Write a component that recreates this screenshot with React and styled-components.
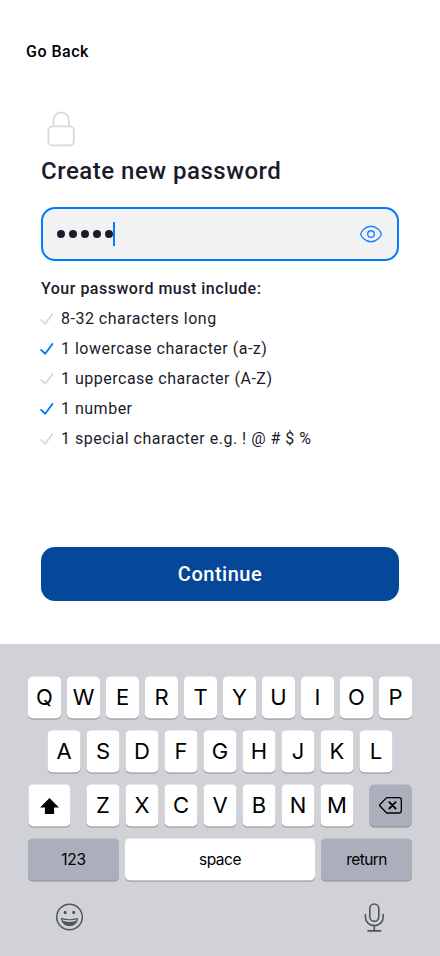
import React from "react";
import styled, { createGlobalStyle } from "styled-components";

const GlobalStyle = createGlobalStyle`
  *, *::before, *::after { box-sizing: border-box; }
  body { margin: 0; background: #fff; font-family: Roboto, sans-serif; }
  svg { display: block; flex: none; }
  button { font: inherit; border: 0; padding: 0; margin: 0; background: none; color: inherit; }
`;

const Screen = styled.div`
  width: 440px;
  height: 956px;
  display: flex;
  flex-direction: column;
  overflow: hidden;
  background: #fff;
`;

const Header = styled.header`
  height: 104px;
  padding: 42px 26px 0;
`;

const BackButton = styled.button`
  display: block;
  color: #000;
  font-size: 16px;
  line-height: 19px;
  font-weight: 500;
  letter-spacing: 0.5px;
`;

const Form = styled.main`
  flex: 1;
  display: flex;
  flex-direction: column;
  padding: 5px 41px 43px;
  color: #1b1b2b;
`;

const LockWrap = styled.div`
  height: 45px;
  padding-left: 5px;
`;

const Title = styled.h1`
  margin: 3px 0 22px;
  font-size: 24px;
  line-height: 28px;
  font-weight: 500;
  letter-spacing: 0.5px;
`;

const Field = styled.div`
  height: 54px;
  display: flex;
  align-items: center;
  padding: 0 14px 0 14px;
  border: 2px solid #007bff;
  border-radius: 14px;
  background: #f2f2f2;
`;

const Dots = styled.div`
  display: flex;
  gap: 4px;
`;

const Dot = styled.span`
  width: 8px;
  height: 8px;
  border-radius: 50%;
  background: #1b1b2b;
`;

const Caret = styled.span`
  width: 2px;
  height: 24px;
  background: #007bff;
`;

const EyeButton = styled.button`
  margin-left: auto;
`;

const RulesTitle = styled.h2`
  margin: 18px 0 1px;
  font-size: 16px;
  line-height: 19px;
  font-weight: 500;
  letter-spacing: 0.5px;
`;

const Rules = styled.ul`
  list-style: none;
  margin: 0;
  padding: 4px 0 0;
`;

const Rule = styled.li`
  height: 30px;
  display: flex;
  align-items: center;
  gap: 6px;
  margin-left: -2px;
  font-size: 16px;
  line-height: 19px;
  letter-spacing: 0.5px;
  color: #1b1b2b;

  svg { color: ${(p) => (p.$met ? "#007bff" : "#d9d9d9")}; }
`;

const ContinueButton = styled.button`
  margin-top: auto;
  height: 54px;
  border-radius: 14px;
  background: #054798;
  color: #fff;
  font-size: 20px;
  font-weight: 500;
  letter-spacing: 0.5px;
`;

const Keyboard = styled.section`
  height: 312px;
  padding-top: 32px;
  background: #d1d2d8;
  font-family: Inter, sans-serif;
  color: #000;
`;

const KeyRow = styled.div`
  display: flex;
  gap: 6px;
  height: 42px;
  margin: 0 0 12px ${(p) => p.$inset}px;
  transform: translate(${(p) => (p.$half ? -0.5 : 0)}px, 0.4px);
`;

const LetterGroup = styled.div`
  display: flex;
  gap: 6px;
  margin: 0 10px;
`;

const Key = styled.button`
  width: ${(p) => p.$width || 33}px;
  height: 42px;
  display: flex;
  align-items: center;
  justify-content: center;
  border-radius: 4.6px;
  background: ${(p) => (p.$muted ? "#abafbb" : "#fff")};
  box-shadow: 0 1px 0 #898a8d;
  font-size: ${(p) => (p.$label ? 15.5 : 22)}px;
  letter-spacing: ${(p) => p.$tracking || 0}px;
`;

const KeyboardFooter = styled.div`
  display: flex;
  justify-content: space-between;
  padding: 10px 54px 0 55px;
  color: #50555c;
  transform: translateY(0.5px);
`;

const LockIcon = () => (
  <svg width="30" height="40" viewBox="0 0 30 40" fill="none" stroke="#d9d9d9" strokeWidth="1.8">
    <rect x="2.3" y="17.4" width="25.5" height="19" rx="4" />
    <path d="M7.5 17V11.5a7.7 8.2 0 0 1 15.4 0V17" />
  </svg>
);

const EyeIcon = () => (
  <svg width="24" height="18" viewBox="0 0 24 18" fill="none" stroke="#1683ff" strokeWidth="1.4">
    <path d="M1.7 9C1.7 6.8 6.3 1.3 12 1.3S22.3 6.8 22.3 9 17.7 16.7 12 16.7 1.7 11.2 1.7 9Z" />
    <circle cx="12" cy="9" r="3.3" />
  </svg>
);

const CheckIcon = () => (
  <svg width="16" height="16" viewBox="0 0 16 16" fill="none" stroke="currentColor" strokeWidth="1.9" strokeLinecap="round" strokeLinejoin="round">
    <path d="M2.1 9.9 6.2 13.7 13.4 4" />
  </svg>
);

const ShiftIcon = () => (
  <svg width="20" height="17" viewBox="0 0 20 17">
    <path d="M10 0.5 19.4 10h-4.8v6.1q0 .4-.4.4H5.8q-.4 0-.4-.4V10H.6Z" />
  </svg>
);

const DeleteIcon = () => (
  <svg width="24" height="18" viewBox="0 0 24 18" fill="none" stroke="#000" strokeWidth="1.3" strokeLinejoin="round">
    <path d="M8.2 1.2H20.5Q22.8 1.2 22.8 3.5v10.8Q22.8 16.6 20.5 16.6H8.2L1.2 9.4Q.8 8.9 1.2 8.4Z" />
    <path d="m10.8 5.8 6.3 6.3m0-6.3-6.3 6.3" strokeWidth="1.8" strokeLinecap="round" />
  </svg>
);

const EmojiIcon = () => (
  <svg width="29" height="29" viewBox="0 0 29 29" fill="none" stroke="currentColor">
    <circle cx="14.5" cy="14.5" r="12.8" strokeWidth="1.5" />
    <ellipse cx="10.2" cy="10" rx="1.5" ry="1.8" fill="currentColor" stroke="none" />
    <ellipse cx="18.7" cy="10" rx="1.5" ry="1.8" fill="currentColor" stroke="none" />
    <path d="M6.4 16.1Q14.5 18.3 22.6 16.1C22.1 20.6 18.5 23 14.5 23S6.9 20.6 6.4 16.1Z" strokeWidth="1.1" strokeLinejoin="round" />
    <path d="M7.2 18.1Q14.5 20.8 21.8 18.1C20.5 21.8 17.5 23 14.5 23S8.5 21.8 7.2 18.1Z" fill="currentColor" stroke="none" />
  </svg>
);

const MicIcon = () => (
  <svg width="24" height="30" viewBox="0 0 24 30" fill="none" stroke="currentColor" strokeWidth="1.6" strokeLinecap="round">
    <rect x="7.8" y="1.5" width="9" height="17.2" rx="4.5" />
    <path d="M3.4 12v2.5a8.9 8.6 0 0 0 17.8 0V12M12.3 23.4v5M6 28.4h12.6" />
  </svg>
);

const RULES = [
  ["8-32 characters long", false],
  ["1 lowercase character (a-z)", true],
  ["1 uppercase character (A-Z)", false],
  ["1 number", true],
  ["1 special character e.g. ! @ # $ %", false],
];

const letters = (text) => text.split("").map((c) => <Key key={c}>{c}</Key>);

export default function App() {
  return (
    <>
      <GlobalStyle />
      <Screen>
        <Header>
          <BackButton>Go Back</BackButton>
        </Header>
        <Form>
          <LockWrap><LockIcon /></LockWrap>
          <Title>Create new password</Title>
          <Field>
            <Dots>
              {[0, 1, 2, 3, 4].map((i) => <Dot key={i} />)}
            </Dots>
            <Caret />
            <EyeButton aria-label="Show password"><EyeIcon /></EyeButton>
          </Field>
          <RulesTitle>Your password must include:</RulesTitle>
          <Rules>
            {RULES.map(([text, met]) => (
              <Rule key={text} $met={met}><CheckIcon />{text}</Rule>
            ))}
          </Rules>
          <ContinueButton>Continue</ContinueButton>
        </Form>
        <Keyboard>
          <KeyRow $inset={28}>{letters("QWERTYUIOP")}</KeyRow>
          <KeyRow $inset={48} $half>{letters("ASDFGHJKL")}</KeyRow>
          <KeyRow $inset={29} $half>
            <Key $width={42} aria-label="Shift"><ShiftIcon /></Key>
            <LetterGroup>{letters("ZXCVBNM")}</LetterGroup>
            <Key $width={42} $muted aria-label="Delete"><DeleteIcon /></Key>
          </KeyRow>
          <KeyRow $inset={28}>
            <Key $width={91} $muted $label $tracking={-0.2}>123</Key>
            <Key $width={190} $label $tracking={-0.5}>space</Key>
            <Key $width={91} $muted $label $tracking={-0.6}>return</Key>
          </KeyRow>
          <KeyboardFooter>
            <EmojiIcon />
            <MicIcon />
          </KeyboardFooter>
        </Keyboard>
      </Screen>
    </>
  );
}
